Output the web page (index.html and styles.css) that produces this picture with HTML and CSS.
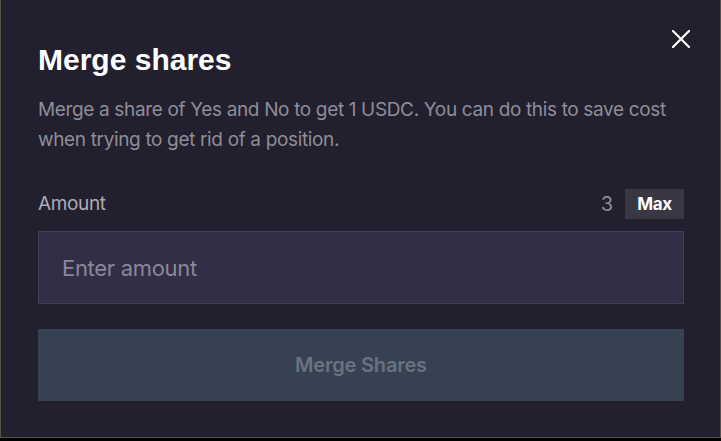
FILE: index.html
```html
<!DOCTYPE html>
<html>
<head>
<meta charset="utf-8">
<link rel="stylesheet" href="styles.css">
</head>
<body>
<div class="modal">
  <button class="close" aria-label="Close">
    <svg width="18" height="18" viewBox="0 0 18 18"><path d="M1 1L17 17M17 1L1 17" stroke="#ffffff" stroke-width="2.2" stroke-linecap="round"/></svg>
  </button>
  <h1 class="title">Merge shares</h1>
  <p class="desc">Merge a share of Yes and No to get 1 USDC. You can do this to save cost when trying to get rid of a position.</p>
  <div class="amount-row">
    <span class="label">Amount</span>
    <div class="balance">
      <span class="bal-num">3</span>
      <button class="max">Max</button>
    </div>
  </div>
  <div class="input">Enter amount</div>
  <button class="submit">Merge Shares</button>
</div>
</body>
</html>
```

FILE: styles.css
```css
html, body {
  margin: 0;
  padding: 0;
  background: #000000;
}
body {
  font-family: Inter, "Liberation Sans", Arial, sans-serif;
}
.modal {
  position: relative;
  box-sizing: border-box;
  width: 721px;
  height: 438px;
  background: #221f2e;
  border: 1px solid #57514a;
  border-top: none;
  padding: 42px 36px 0 37px;
}
.close {
  position: absolute;
  top: 30px;
  left: 671px;
  width: 18px;
  height: 18px;
  padding: 0;
  border: none;
  background: transparent;
  display: block;
}
.close svg { display: block; }
.title {
  margin: 0;
  font-family: "Liberation Sans", Arial, sans-serif;
  font-size: 30px;
  line-height: 36px;
  font-weight: 700;
  color: #ffffff;
}
.desc {
  margin: 17px 0 0 0;
  font-size: 19px;
  line-height: 30px;
  color: #8f8d99;
  letter-spacing: -0.35px;
}
.amount-row {
  margin-top: 34px;
  height: 30px;
  display: flex;
  align-items: center;
  justify-content: space-between;
}
.label {
  font-size: 19px;
  line-height: 30px;
  color: #adabb5;
  letter-spacing: -0.35px;
}
.balance {
  display: flex;
  align-items: center;
  gap: 12px;
}
.bal-num {
  font-size: 20px;
  color: #8f8d99;
}
.max {
  width: 59px;
  height: 30px;
  border: none;
  padding: 0;
  background: #393744;
  color: #ffffff;
  font-family: Inter, "Liberation Sans", Arial, sans-serif;
  font-weight: 700;
  font-size: 17px;
  letter-spacing: -0.3px;
}
.input {
  box-sizing: border-box;
  margin-top: 12px;
  height: 73px;
  background: #322e45;
  border: 1px solid #433e58;
  padding-left: 23px;
  display: flex;
  align-items: center;
  font-size: 22px;
  color: #8b8898;
  letter-spacing: -0.3px;
}
.submit {
  display: block;
  box-sizing: border-box;
  margin-top: 25px;
  width: 100%;
  height: 72px;
  border: none;
  background: #364152;
  color: #6b7280;
  font-family: Inter, "Liberation Sans", Arial, sans-serif;
  font-weight: 600;
  font-size: 20px;
  letter-spacing: -0.2px;
}
```
